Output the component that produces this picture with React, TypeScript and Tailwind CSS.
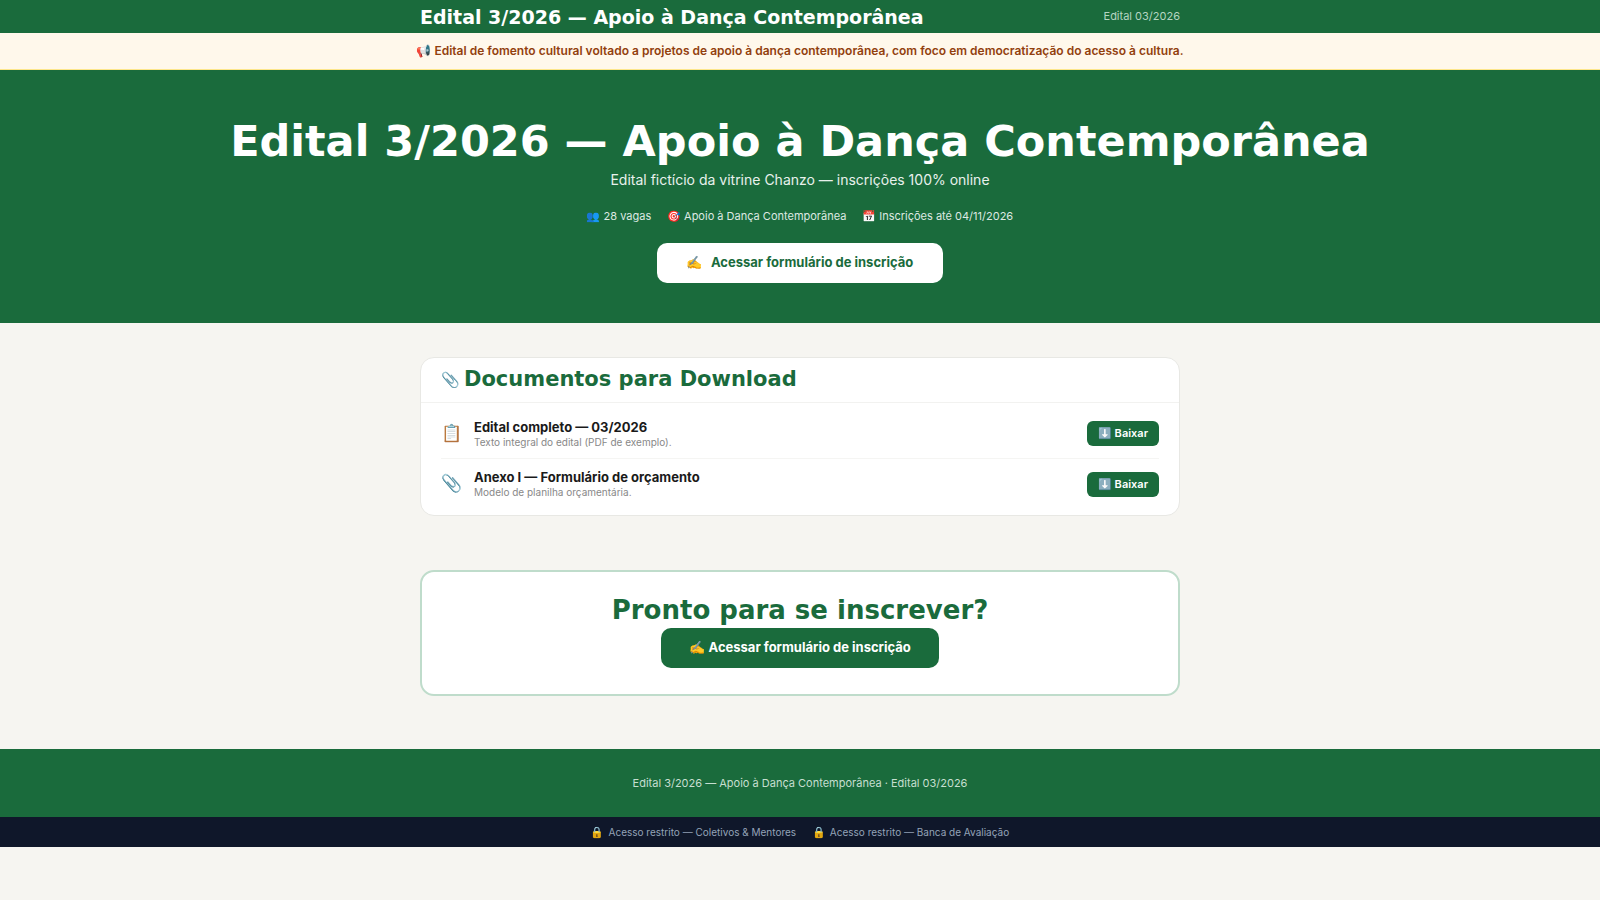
import React from 'react';

interface DocumentItem {
  id: string;
  icon: string;
  title: string;
  description: string;
}

const EDITAL_TITLE = 'Edital 3/2026 — Apoio à Dança Contemporânea';

const documents: DocumentItem[] = [
  {
    id: 'edital',
    icon: '📋',
    title: 'Edital completo — 03/2026',
    description: 'Texto integral do edital (PDF de exemplo).',
  },
  {
    id: 'anexo-1',
    icon: '📎',
    title: 'Anexo I — Formulário de orçamento',
    description: 'Modelo de planilha orçamentária.',
  },
];

const highlights = [
  { icon: '👥', label: '28 vagas' },
  { icon: '🎯', label: 'Apoio à Dança Contemporânea' },
  { icon: '📅', label: 'Inscrições até 04/11/2026' },
];

const restrictedLinks = ['Coletivos & Mentores', 'Banca de Avaliação'];

function Header() {
  return (
    <header className="bg-[#1a6b3c]">
      <div className="mx-auto flex h-[33px] max-w-[800px] items-center justify-between px-5">
        <span className="whitespace-nowrap font-['DejaVu_Sans',sans-serif] text-[19px] font-bold leading-5 text-white">
          {EDITAL_TITLE}
        </span>
        <span className="whitespace-nowrap text-[11px] text-[#b5d5c1]">Edital 03/2026</span>
      </div>
    </header>
  );
}

function Hero() {
  return (
    <section className="flex flex-col items-center bg-[#1a6b3c] px-5 pt-12 pb-10 text-center text-white">
      <h1 className="font-['DejaVu_Sans',sans-serif] text-[43px] font-bold leading-[46px]">{EDITAL_TITLE}</h1>
      <p className="mt-1 text-[14px] leading-6 text-[#e8f1ec]">
        Edital fictício da vitrine Chanzo — inscrições 100% online
      </p>
      <ul className="mt-4 flex flex-wrap justify-center gap-4 text-[11px] leading-4 text-[#dde9e2]">
        {highlights.map((item) => (
          <li key={item.label}>
            {item.icon} {item.label}
          </li>
        ))}
      </ul>
      <a
        href="#inscricao"
        className="mt-[19px] flex h-10 items-center gap-2 rounded-[10px] bg-white px-[30px] text-[13px] font-bold text-[#1a6b3c]"
      >
        <span>✍️</span>
        Acessar formulário de inscrição
      </a>
    </section>
  );
}

function DocumentRow({ item }: { item: DocumentItem }) {
  return (
    <li className="flex h-[50px] items-center gap-3">
      <span className="w-[21px] text-center text-[17px]">{item.icon}</span>
      <div className="flex-1">
        <h3 className="text-[13px] font-bold leading-4 text-[#1a1a1a]">{item.title}</h3>
        <p className="text-[10px] leading-[14px] text-[#888888]">{item.description}</p>
      </div>
      <a
        href={`#${item.id}`}
        className="flex h-[25px] items-center rounded-md bg-[#1a6b3c] px-[11px] text-[11px] font-semibold text-white"
      >
        ⬇️ Baixar
      </a>
    </li>
  );
}

function Documents() {
  return (
    <section className="rounded-[14px] border border-[#e8e8e4] bg-white">
      <h2 className="flex h-[45px] items-center gap-1 border-b border-[#f2f2f0] px-5 font-['DejaVu_Sans',sans-serif] text-[21px] font-bold text-[#1a6b3c]">
        <span className="text-[15px]">📎</span>
        Documentos para Download
      </h2>
      <ul className="divide-y divide-[#f5f5f3] px-5 py-[6px]">
        {documents.map((item) => (
          <DocumentRow key={item.id} item={item} />
        ))}
      </ul>
    </section>
  );
}

function CallToAction() {
  return (
    <section className="mt-[54px] flex flex-col items-center rounded-[14px] border-2 border-[#bfdccb] bg-white px-5 py-[26px]">
      <h2 className="mb-[6px] font-['DejaVu_Sans',sans-serif] text-[26px] font-bold leading-6 text-[#1a6b3c]">
        Pronto para se inscrever?
      </h2>
      <a
        href="#inscricao"
        className="flex h-10 items-center rounded-[10px] bg-[#1a6b3c] px-7 text-[13px] font-bold text-white"
      >
        ✍️ Acessar formulário de inscrição
      </a>
    </section>
  );
}

export default function App() {
  return (
    <div className="min-h-screen bg-[#f6f5f1] font-['Inter','Noto_Color_Emoji',sans-serif]">
      <Header />
      <p className="border-b border-[#fde68a] bg-[#fff8eb] px-5 py-2 text-center text-[12px] font-semibold leading-5 text-[#92400e]">
        📢 Edital de fomento cultural voltado a projetos de apoio à dança contemporânea, com foco em democratização do
        acesso à cultura.
      </p>
      <Hero />
      <main className="mx-auto max-w-[800px] px-5 pt-[34px] pb-[53px]">
        <Documents />
        <CallToAction />
      </main>
      <footer>
        <p className="bg-[#1a6b3c] py-6 text-center text-[11px] leading-5 text-[#c6dfd0]">
          {EDITAL_TITLE} · Edital 03/2026
        </p>
        <nav className="flex flex-wrap justify-center gap-4 bg-[#0f172a] py-[6px] text-[10px] leading-[18px] text-[#94a3b8]">
          {restrictedLinks.map((label) => (
            <a key={label} href="#acesso" className="flex items-center gap-1">
              <span className="text-[11px]">🔒</span>
              Acesso restrito — {label}
            </a>
          ))}
        </nav>
      </footer>
    </div>
  );
}
